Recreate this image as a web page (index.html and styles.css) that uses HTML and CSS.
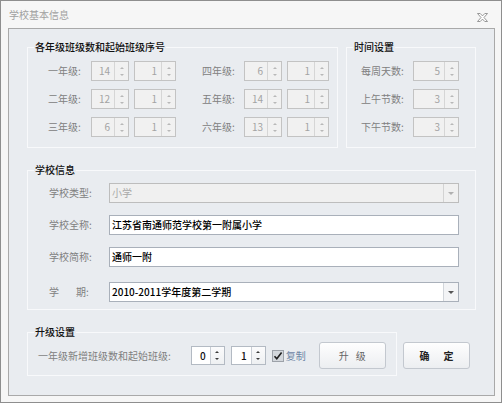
FILE: index.html
```html
<!DOCTYPE html>
<html lang="zh-CN">
<head>
<meta charset="utf-8">
<title>学校基本信息</title>
<link rel="stylesheet" href="styles.css">
</head>
<body>
<div class="window">
  <div class="titlebar">
    <span class="title">学校基本信息</span>
    <span class="close"><svg width="11" height="9" viewBox="0 0 11 9"><path d="M0.5 0.5H3.2L5.5 2.9L7.8 0.5H10.5L7 4.5L10.5 8.5H7.8L5.5 6.1L3.2 8.5H0.5L4 4.5Z" fill="#fff" stroke="#808080" stroke-width="0.8"/></svg></span>
  </div>
  <div class="client">
    <div class="top-row">
      <fieldset class="group group-grades">
        <legend>各年级班级数和起始班级序号</legend>
        <div class="grades">
          <span class="lbl">一年级:</span>
          <span class="spin off"><span class="val">14</span><span class="arrows"><i class="up"></i><i class="dn"></i></span></span>
          <span class="spin off"><span class="val">1</span><span class="arrows"><i class="up"></i><i class="dn"></i></span></span>
          <span class="lbl lbl-r">四年级:</span>
          <span class="spin off"><span class="val">6</span><span class="arrows"><i class="up"></i><i class="dn"></i></span></span>
          <span class="spin off"><span class="val">1</span><span class="arrows"><i class="up"></i><i class="dn"></i></span></span>

          <span class="lbl">二年级:</span>
          <span class="spin off"><span class="val">12</span><span class="arrows"><i class="up"></i><i class="dn"></i></span></span>
          <span class="spin off"><span class="val">1</span><span class="arrows"><i class="up"></i><i class="dn"></i></span></span>
          <span class="lbl lbl-r">五年级:</span>
          <span class="spin off"><span class="val">14</span><span class="arrows"><i class="up"></i><i class="dn"></i></span></span>
          <span class="spin off"><span class="val">1</span><span class="arrows"><i class="up"></i><i class="dn"></i></span></span>

          <span class="lbl">三年级:</span>
          <span class="spin off"><span class="val">6</span><span class="arrows"><i class="up"></i><i class="dn"></i></span></span>
          <span class="spin off"><span class="val">1</span><span class="arrows"><i class="up"></i><i class="dn"></i></span></span>
          <span class="lbl lbl-r">六年级:</span>
          <span class="spin off"><span class="val">13</span><span class="arrows"><i class="up"></i><i class="dn"></i></span></span>
          <span class="spin off"><span class="val">1</span><span class="arrows"><i class="up"></i><i class="dn"></i></span></span>
        </div>
      </fieldset>
      <fieldset class="group group-time">
        <legend>时间设置</legend>
        <div class="time">
          <span class="lbl">每周天数:</span>
          <span class="spin off"><span class="val">5</span><span class="arrows"><i class="up"></i><i class="dn"></i></span></span>
          <span class="lbl">上午节数:</span>
          <span class="spin off"><span class="val">3</span><span class="arrows"><i class="up"></i><i class="dn"></i></span></span>
          <span class="lbl">下午节数:</span>
          <span class="spin off"><span class="val">3</span><span class="arrows"><i class="up"></i><i class="dn"></i></span></span>
        </div>
      </fieldset>
    </div>

    <fieldset class="group group-school">
      <legend>学校信息</legend>
      <div class="school">
        <span class="lbl">学校类型:</span>
        <div class="combo off"><span class="text">小学</span><span class="drop"><i class="tri"></i></span></div>
        <span class="lbl">学校全称:</span>
        <div class="field"><span class="text">江苏省南通师范学校第一附属小学</span></div>
        <span class="lbl">学校简称:</span>
        <div class="field"><span class="text">通师一附</span></div>
        <span class="lbl term">学<span class="gap"></span>期:</span>
        <div class="combo term"><span class="text">2010-2011学年度第二学期</span><span class="drop"><i class="tri"></i></span></div>
      </div>
    </fieldset>

    <div class="bottom-row">
      <fieldset class="group group-upgrade">
        <legend>升级设置</legend>
        <div class="upgrade">
          <span class="lbl">一年级新增班级数和起始班级:</span>
          <span class="spin on s0"><span class="val">0</span><span class="arrows"><i class="up"></i><i class="dn"></i></span></span>
          <span class="spin on s1"><span class="val">1</span><span class="arrows"><i class="up"></i><i class="dn"></i></span></span>
          <span class="check"><svg width="10" height="10" viewBox="0 0 10 10"><path d="M1.5 5.2L3.8 7.8L8.6 1.6" fill="none" stroke="#1f1f1f" stroke-width="1.6"/></svg></span>
          <span class="check-lbl">复制</span>
          <button class="btn btn-up">升级</button>
        </div>
      </fieldset>
      <button class="btn btn-ok">确定</button>
    </div>
  </div>
</div>
</body>
</html>
```
FILE: styles.css
```css
* { box-sizing: border-box; }
html, body { margin: 0; padding: 0; }
body {
  font-family: "Noto Sans CJK SC", "Microsoft YaHei", sans-serif;
  font-size: 10px;
  color: #222;
  background: #fff;
}
.window {
  width: 502px;
  height: 403px;
  border: 1px solid #8e8e8e;
  background: #f6f6f6;
  display: flex;
  flex-direction: column;
}
.titlebar {
  flex: none;
  height: 27px;
  display: flex;
  align-items: center;
  justify-content: space-between;
  padding: 0 13px 0 8px;
}
.title { color: #a0a0a0; line-height: 12px; padding-top: 1px; }
.close { display: flex; width: 11px; height: 9px; margin-top: 5px; }

.client {
  flex: none;
  margin: 0 6px 6px 7px;
  height: 368px;
  border: 1px solid #a9a9a9;
  background: #e9ecf0;
  padding: 11px 17px 0 18px;
}
.top-row { display: flex; gap: 8px; }

.group {
  margin: 0;
  padding: 0;
  min-width: 0;
  border: 1px solid #f8f9fb;
}
.group legend {
  margin-left: 6px;
  padding: 0 1px;
  line-height: 14px;
  font-weight: 500;
  color: #111;
}
.group-grades { width: 311px; }
.group-time { width: 130px; }
.group-school { width: 449px; margin-top: 15px; }
.group-upgrade { width: 370px; }

.lbl { color: #808080; line-height: 20px; white-space: nowrap; }
.lbl-r { padding-left: 21px; }

.grades {
  display: grid;
  grid-template-columns: 38px 38px 42px 58px 38px 42px;
  grid-auto-rows: 20px;
  column-gap: 5px;
  row-gap: 8px;
  padding: 7px 0 10px 20px;
}
.time {
  display: grid;
  grid-template-columns: 52px 46px;
  grid-auto-rows: 20px;
  row-gap: 8px;
  padding: 7px 0 10px 14px;
}

/* spinner */
.spin {
  display: flex;
  height: 20px;
  border: 1px solid #c3c3c3;
  background: #f1f1f1;
}
.spin .val {
  flex: 1;
  text-align: right;
  padding-right: 4px;
  line-height: 18px;
  color: #a3a3a3;
}
.spin .arrows {
  flex: none;
  width: 14px;
  border-left: 1px solid #d6d6d6;
  display: flex;
  flex-direction: column;
  align-items: center;
  justify-content: center;
  gap: 5px;
}
.spin .up, .spin .dn {
  display: block;
  width: 0;
  height: 0;
  border-left: 2px solid transparent;
  border-right: 2px solid transparent;
}
.spin .up { border-bottom: 2px solid #b8b8b8; }
.spin .dn { border-top: 2px solid #b8b8b8; }

.spin.on { background: #fff; border-color: #b3bac3; height: 19px; }
.spin.on .val { color: #111; font-weight: 500; line-height: 17px; }
.spin.on .arrows { border-left-color: #c9ced5; background: linear-gradient(#fbfbfc, #eef0f2); }
.spin.on .up { border-bottom-color: #3a3a3a; }
.spin.on .dn { border-top-color: #3a3a3a; }
.s0 { width: 34px; margin-left: 20px; }
.s1 { width: 35px; margin-left: 6px; }

/* school info */
.school {
  display: grid;
  grid-template-columns: 60px 350px;
  grid-auto-rows: 20px;
  row-gap: 12px;
  padding: 6px 0 10px 21px;
}
.school .term { margin-top: 3px; }
.gap { display: inline-block; width: 17px; }
.field, .combo {
  display: flex;
  height: 20px;
  border: 1px solid #a9b0ba;
  background: #fff;
}
.field .text, .combo .text {
  flex: 1;
  padding-left: 2px;
  line-height: 18px;
  color: #000;
  font-weight: 500;
  white-space: nowrap;
}
.combo .drop {
  flex: none;
  width: 15px;
  border-left: 1px solid #d2d6db;
  background: #f3f4f6;
  display: flex;
  align-items: center;
  justify-content: center;
}
.combo .tri {
  display: block;
  width: 0;
  height: 0;
  border-left: 3px solid transparent;
  border-right: 3px solid transparent;
  border-top: 3px solid #555;
}
.combo.off { background: #f0f0f0; border-color: #bdbdbd; }
.combo.off .text { color: #a8a8a8; font-weight: normal; }
.combo.off .drop { background: #f0f0f0; border-left-color: #d3d3d3; }
.combo.off .tri { border-top-color: #b0b0b0; }

/* bottom */
.bottom-row {
  display: flex;
  align-items: flex-end;
  gap: 6px;
  margin-top: 15px;
}
.upgrade {
  display: flex;
  align-items: center;
  padding: 3px 9px 6px 10px;
}
.check {
  display: flex;
  align-items: center;
  justify-content: center;
  width: 12px;
  height: 12px;
  margin-left: 6px;
  border: 1px solid #9da2a9;
  background: #d3d7dc;
}
.check-lbl { margin-left: 2px; color: #6f86a6; line-height: 20px; }

.btn {
  height: 27px;
  width: 67px;
  padding: 0;
  border: 1px solid #c3c8cf;
  border-radius: 3px;
  background: linear-gradient(#fefefe, #eceef1);
  font-family: inherit;
  font-size: 10px;
  line-height: 25px;
  cursor: pointer;
}
.btn-up { margin-left: 13px; color: #666; font-weight: normal; letter-spacing: 7px; text-indent: 7px; }
.btn-ok { margin-bottom: 7px; color: #222; font-weight: bold; letter-spacing: 14px; text-indent: 14px; }
```
